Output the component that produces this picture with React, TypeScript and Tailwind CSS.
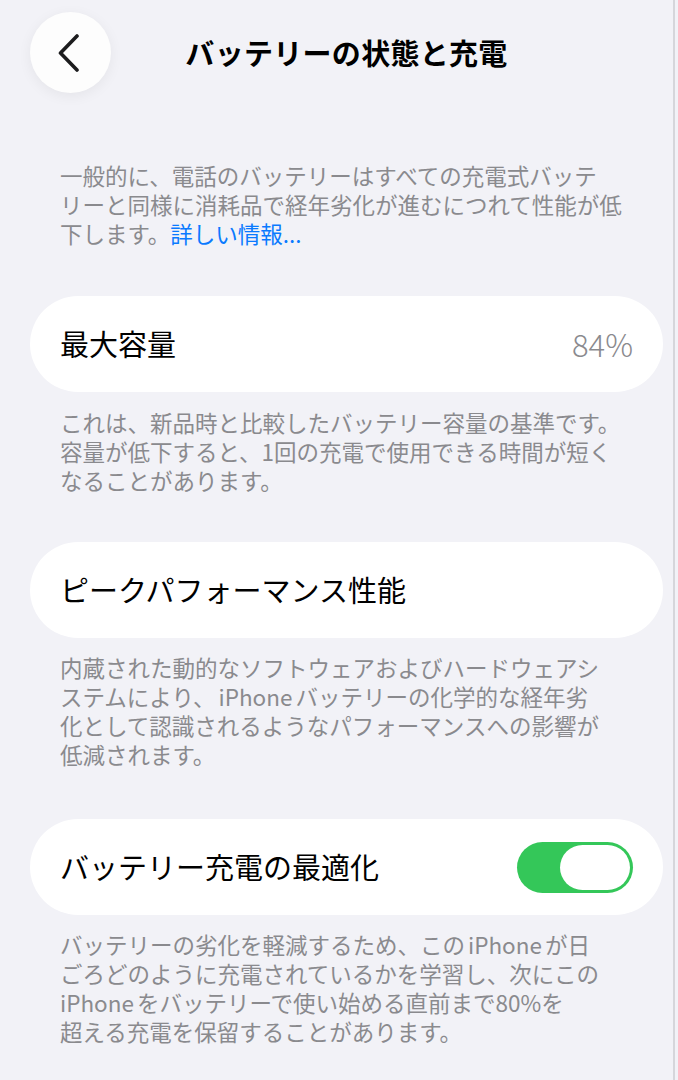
import { ReactNode } from 'react';

const font = "font-['Noto_Sans_CJK_JP','Noto_Sans',sans-serif]";

function IPhone() {
  return <span className="mx-[3px]">iPhone</span>;
}

function Note({ lines, className = '' }: { lines: ReactNode[]; className?: string }) {
  return (
    <div className={`px-[30px] text-[22.5px] leading-[29px] text-[#8a8a8e] ${className}`}>
      {lines.map((line, i) => (
        <div key={i} className="whitespace-nowrap">
          {line}
        </div>
      ))}
    </div>
  );
}

function Row({ label, children, className = '' }: { label: string; children?: ReactNode; className?: string }) {
  return (
    <div className={`h-[96px] rounded-full bg-white pl-[30px] pr-[30px] flex items-center justify-between ${className}`}>
      <span className="text-[29px] text-black">{label}</span>
      {children}
    </div>
  );
}

function Toggle() {
  return (
    <div className="w-[116px] h-[51px] rounded-full bg-[#34c759] p-[3px] flex justify-end">
      <div className="w-[70px] h-[45px] rounded-full bg-white" />
    </div>
  );
}

export default function App() {
  return (
    <div className={`min-h-[1080px] bg-[#f2f2f7] flex ${font}`}>
      <div className="flex-1 pl-[30px] pr-[10px]">
        {/* nav bar */}
        <div className="pt-[12px] flex items-center">
          <button className="w-[81px] h-[81px] rounded-full bg-[#fdfdfd] shadow-[0_3px_14px_rgba(0,0,0,0.06)] flex items-center justify-center">
            <svg width="24" height="38" viewBox="0 0 24 38" fill="none" className="-ml-[4px]">
              <path d="M20 2 L3.5 19 L20 36" stroke="#1c1c1e" strokeWidth="3.6" strokeLinecap="round" strokeLinejoin="round" />
            </svg>
          </button>
          <h1 className="flex-1 text-center text-[29px] font-bold text-black tracking-[0.3px]">
            バッテリーの状態と充電
          </h1>
          <div className="w-[81px]" />
        </div>

        <Note
          className="mt-[68px]"
          lines={[
            '一般的に、電話のバッテリーはすべての充電式バッテ',
            'リーと同様に消耗品で経年劣化が進むにつれて性能が低',
            <>
              下します。<span className="text-[#0a7aff]">詳しい情報...</span>
            </>,
          ]}
        />

        <Row label="最大容量" className="mt-[48px]">
          <span className="text-[31px] font-light text-[#8a8a8e]">84%</span>
        </Row>
        <Note
          className="mt-[16px]"
          lines={[
            'これは、新品時と比較したバッテリー容量の基準です。',
            '容量が低下すると、1回の充電で使用できる時間が短く',
            'なることがあります。',
          ]}
        />

        <Row label="ピークパフォーマンス性能" className="mt-[47px]" />
        <Note
          className="mt-[15px]"
          lines={[
            '内蔵された動的なソフトウェアおよびハードウェアシ',
            <>
              ステムにより、<IPhone />バッテリーの化学的な経年劣
            </>,
            '化として認識されるようなパフォーマンスへの影響が',
            '低減されます。',
          ]}
        />

        <Row label="バッテリー充電の最適化" className="mt-[50px]">
          <Toggle />
        </Row>
        <Note
          className="mt-[15px]"
          lines={[
            <>
              バッテリーの劣化を軽減するため、この<IPhone />が日
            </>,
            'ごろどのように充電されているかを学習し、次にこの',
            <>
              <span className="mr-[3px]">iPhone</span>をバッテリーで使い始める直前まで80%を
            </>,
            '超える充電を保留することがあります。',
          ]}
        />
      </div>
      <div className="w-[2px] bg-[#d6d6db]" />
      <div className="w-[3px]" />
    </div>
  );
}
